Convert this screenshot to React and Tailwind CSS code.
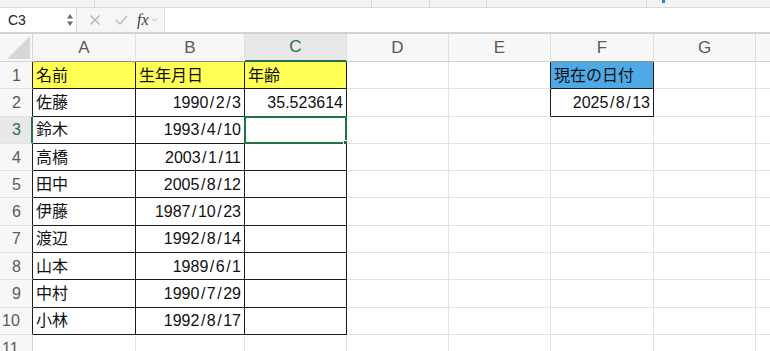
import React from 'react';

const FONT = { fontFamily: '"Liberation Sans", "Noto Sans CJK JP", sans-serif' };

const cols = [
  { key: 'A', w: 'w-[103px]' },
  { key: 'B', w: 'w-[109px]' },
  { key: 'C', w: 'w-[102px]' },
  { key: 'D', w: 'w-[102px]' },
  { key: 'E', w: 'w-[102px]' },
  { key: 'F', w: 'w-[103px]' },
  { key: 'G', w: 'w-[102px]' },
  { key: '', w: 'w-[100px]' },
];

const rows = [
  ['名前', '生年月日', '年齢', '', '', '現在の日付'],
  ['佐藤', '1990/2/3', '35.523614', '', '', '2025/8/13'],
  ['鈴木', '1993/4/10'],
  ['高橋', '2003/1/11'],
  ['田中', '2005/8/12'],
  ['伊藤', '1987/10/23'],
  ['渡辺', '1992/8/14'],
  ['山本', '1989/6/1'],
  ['中村', '1990/7/29'],
  ['小林', '1992/8/17'],
  [],
];

// dates: the reference font draws a wider slash
const CellText = ({ value }) => {
  if (!value.includes('/')) return value;
  const parts = value.split('/');
  return parts.map((p, i) => (
    <React.Fragment key={i}>
      {p}
      {i < parts.length - 1 && <span className="mx-[1.5px]">/</span>}
    </React.Fragment>
  ));
};

const inTable = (r, c) => (r >= 1 && r <= 10 && c <= 2) || (r >= 1 && r <= 2 && c === 5);

const Cell = ({ r, c, value }) => {
  const rightBlack = inTable(r, c) || (c === 4 && r >= 1 && r <= 2);
  const bottomBlack = inTable(r, c);
  let bg = 'bg-white';
  if (r === 1 && c <= 2) bg = 'bg-[#ffff55]';
  if (r === 1 && c === 5) bg = 'bg-[#4fa9e6]';
  const right = r > 1 && (c === 1 || c === 2 || c === 5);
  const selected = r === 3 && c === 2;

  return (
    <div
      className={`relative h-full shrink-0 border-r border-b flex items-center px-[3px] pt-[1px] ${cols[c].w} ${bg} ${
        rightBlack ? 'border-r-[#1c1c1c]' : 'border-r-[#e2e2e2]'
      } ${bottomBlack ? 'border-b-[#1c1c1c]' : 'border-b-[#e2e2e2]'} ${right ? 'justify-end' : 'justify-start'}`}
    >
      <span className="whitespace-nowrap text-[16px] text-[#111]">
        <CellText value={value || ''} />
      </span>
      {selected && (
        <div className="absolute -left-[1px] -top-[1px] -right-[1px] -bottom-[1px] border-2 border-[#217346]">
          <div className="absolute -right-[4px] -bottom-[4px] w-[6px] h-[6px] bg-[#217346] border border-white" />
        </div>
      )}
    </div>
  );
};

const RowHeader = ({ n }) => {
  const sel = n === 3;
  const black = n >= 1 && n <= 10 && !sel;
  return (
    <div
      className={`h-full w-[33px] shrink-0 flex items-center border-b border-b-[#e2e2e2] text-[16px] pt-[1px] ${
        n >= 10 ? 'pl-[2px]' : 'pl-[12px]'
      } ${
        sel
          ? 'bg-[#e8e8e8] text-[#217346] border-r-2 border-r-[#217346]'
          : black
          ? 'bg-[#f7f7f7] text-[#5a5a5a] border-r border-r-[#1c1c1c]'
          : 'bg-[#f7f7f7] text-[#5a5a5a] border-r border-r-[#d4d4d4]'
      }`}
    >
      {n}
    </div>
  );
};

const App = () => {
  return (
    <div className="w-[770px] h-[351px] overflow-hidden bg-white" style={FONT}>
      {/* ribbon edge */}
      <div className="h-[8px] bg-[#f3f3f3] border-b border-[#d9d9d9] flex">
        <div className="w-[95px] border-r border-[#d6d6d6]" />
        <div className="w-[277px] border-r border-[#d6d6d6]" />
        <div className="w-[58px] border-r border-[#d6d6d6]" />
        <div className="w-[57px] border-r border-[#d6d6d6]" />
        <div className="w-[160px] border-r border-[#d6d6d6]" />
        <div className="ml-[15px] w-[3px] h-[3px] bg-[#2f7de1]" />
      </div>

      {/* formula bar */}
      <div className="h-[24px] flex bg-[#f6f6f6]">
        <div className="w-[77px] bg-white flex items-center justify-between pl-[8px] pr-[2px] border-r border-[#e0e0e0]">
          <span className="text-[14px] text-[#222]">C3</span>
          <svg width="8" height="16" viewBox="0 0 8 16">
            <path d="M4 2 L7 6.5 L1 6.5 Z" fill="#6b6b6b" />
            <path d="M4 14 L7 9.5 L1 9.5 Z" fill="#6b6b6b" />
          </svg>
        </div>
        <div className="w-[87px] flex items-center">
          <svg className="ml-[12px]" width="12" height="12" viewBox="0 0 12 12">
            <path d="M1.5 1.5 L10.5 10.5 M10.5 1.5 L1.5 10.5" stroke="#b9b9b9" strokeWidth="1.5" fill="none" />
          </svg>
          <svg className="ml-[14px]" width="13" height="12" viewBox="0 0 13 12">
            <path d="M1 6 L5 10 L12 2" stroke="#b9b9b9" strokeWidth="1.5" fill="none" />
          </svg>
          <span
            className="ml-[9px] text-[16px] italic text-[#444]"
            style={{ fontFamily: '"Liberation Serif", serif' }}
          >
            fx
          </span>
          <svg className="ml-[2px]" width="7" height="6" viewBox="0 0 7 6">
            <path d="M1 1.5 L3.5 4 L6 1.5" stroke="#b5b5b5" strokeWidth="1" fill="none" />
          </svg>
        </div>
        <div className="flex-1 bg-white border-l border-[#dcdcdc]" />
      </div>
      <div className="h-[2px] bg-[#d2d2d2]" />

      {/* column headers */}
      <div className="h-[28px] flex">
        <div className="w-[33px] shrink-0 bg-[#f7f7f7] border-r border-b border-[#d4d4d4] flex items-end justify-end pr-[2px] pb-[2px]">
          <svg width="23" height="23" viewBox="0 0 23 23">
            <path d="M23 0 L23 23 L0 23 Z" fill="#d7d7d7" />
          </svg>
        </div>
        {cols.map((col, i) => (
          <div
            key={i}
            className={`${col.w} shrink-0 flex items-center justify-center text-[17px] border-r border-r-[#dedede] ${
              i === 2
                ? 'bg-[#e8e8e8] text-[#217346] border-b-2 border-b-[#217346]'
                : i <= 1 || i === 5
                ? 'bg-[#f7f7f7] text-[#5a5a5a] border-b border-b-[#8a8a8a]'
                : 'bg-[#f7f7f7] text-[#5a5a5a] border-b border-b-[#d4d4d4]'
            }`}
          >
            {col.key}
          </div>
        ))}
      </div>

      {/* grid */}
      {rows.map((row, r) => (
        <div key={r} className="h-[27.3px] flex">
          <RowHeader n={r + 1} />
          {cols.map((col, c) => (
            <Cell key={c} r={r + 1} c={c} value={row[c]} />
          ))}
        </div>
      ))}
    </div>
  );
};

export default App;
